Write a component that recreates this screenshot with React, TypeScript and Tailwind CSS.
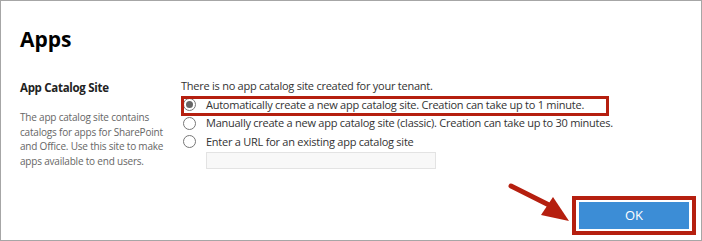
import React from "react";

function Radio({ checked }: { checked?: boolean }) {
  return (
    <span className="relative flex h-[13px] w-[13px] shrink-0 items-center justify-center rounded-full border border-[#777] bg-white">
      {checked && <span className="h-[7px] w-[7px] rounded-full bg-[#666]" />}
    </span>
  );
}

export default function App() {
  return (
    <div
      className="relative h-[241px] w-[702px] overflow-hidden border border-[#a6a6a6] bg-white text-[#333]"
      style={{ fontFamily: '"Open Sans", "Noto Sans", sans-serif' }}
    >
      <h1 className="pl-[19px] pt-[22px] text-[21px] font-bold leading-[32px] text-black">Apps</h1>
      <div className="mt-[22px] flex">
        <div className="w-[180px] shrink-0 pl-[19px] pr-[16px]">
          <div className="mt-[2px] text-[11.5px] font-bold leading-[18px] tracking-[-0.3px] text-[#222]">App Catalog Site</div>
          <p className="mt-[13px] text-[10px] leading-[14.7px] tracking-[-0.2px] text-[#666]">
            The app catalog site contains catalogs for apps for SharePoint and Office. Use this site to make apps available to end users.
          </p>
        </div>
        <div className="flex flex-col text-[11px] leading-[18.5px] tracking-[-0.25px] text-[#333]">
          <div>There is no app catalog site created for your tenant.</div>
          <div className="flex items-center gap-[10px] pl-[2px]">
            <Radio checked />
            <span>Automatically create a new app catalog site. Creation can take up to 1 minute.</span>
          </div>
          <div className="flex items-center gap-[10px] pl-[2px]">
            <Radio />
            <span>Manually create a new app catalog site (classic). Creation can take up to 30 minutes.</span>
          </div>
          <div className="flex items-center gap-[10px] pl-[2px]">
            <Radio />
            <span>Enter a URL for an existing app catalog site</span>
          </div>
          <div className="ml-[25px] mt-[1px] h-[17px] w-[230px] border border-[#e3e3e3] bg-[#f8f8f8]" />
        </div>
      </div>

      <div className="absolute bottom-[5px] right-[5px] flex h-[39px] w-[124px] items-center justify-center border-[4px] border-[#b51f0f] bg-white">
        <button className="flex h-[27px] w-[110px] items-center justify-center bg-[#3c8dd6] text-[13px] text-white">OK</button>
      </div>

      <div className="pointer-events-none absolute left-[180px] top-[95px] h-[20px] w-[428px] border-[3px] border-[#b51f0f]" />

      <svg className="pointer-events-none absolute left-0 top-0" width="702" height="241">
        <line x1="510" y1="185" x2="548" y2="204" stroke="#b51f0f" strokeWidth="5" strokeLinecap="round" />
        <polygon points="552,196 540,214 568,220" fill="#b51f0f" />
      </svg>
    </div>
  );
}
